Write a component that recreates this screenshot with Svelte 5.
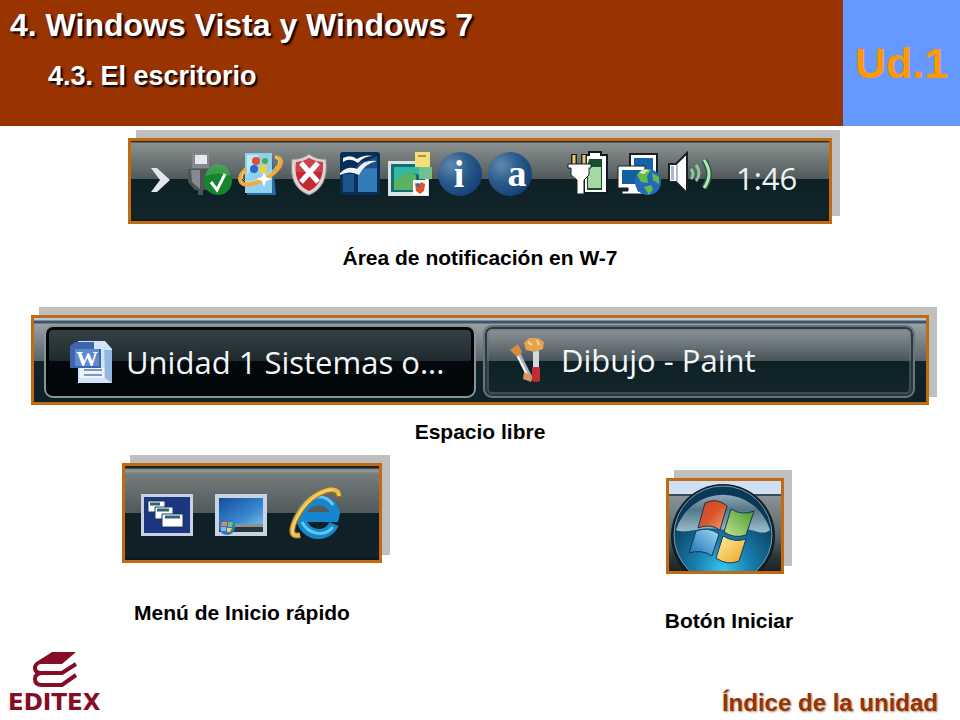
<script>
  const unit = 'Ud.1';
  const tasks = [
    { label: 'Unidad 1 Sistemas o...', icon: 'word', active: true },
    { label: 'Dibujo - Paint', icon: 'paint', active: false }
  ];
</script>

<div class="slide">
  <header>
    <div class="titles">
      <h1>4. Windows Vista y Windows 7</h1>
      <h2>4.3. El escritorio</h2>
    </div>
    <div class="unit">{unit}</div>
  </header>

  <main>
    <figure class="tray-figure">
      <div class="frame tray">
        <svg class="chevron" width="22" height="46" viewBox="0 0 22 46" aria-hidden="true">
          <path d="M1 17h6l13 12L7 41H1l9-12z" fill="#e4e6ef" />
        </svg>
        <svg width="46" height="46" viewBox="0 0 46 46" aria-hidden="true">
          <path d="M5 2h17v15H5z" fill="#85888c" />
          <path d="M8 4h12v9H8z" fill="#e8e8ee" />
          <path d="M1 18h25v14l-6 7h-4v5h-5v-5H8l-7-8z" fill="#4e5358" />
          <path d="M4 19h9v19l-8-7z" fill="#858a8e" />
          <circle cx="31" cy="30" r="14" fill="#16832d" />
          <path d="M19 25a12 12 0 0 1 24 0q-12-5-24 0z" fill="#48ad55" opacity=".7" />
          <path d="M24 31l6 8 8-16" fill="none" stroke="#fff" stroke-width="3" />
        </svg>
        <svg width="46" height="46" viewBox="0 0 46 46" aria-hidden="true">
          <path d="M10 4h25l4 40H10z" fill="#286ba5" />
          <path d="M8 2h27v40H8z" fill="#8fd2ef" />
          <path d="M10 4h12L10 24z" fill="#c1e9f6" />
          <circle cx="19" cy="10" r="4" fill="#df5137" />
          <circle cx="28" cy="10" r="3" fill="#50a947" />
          <circle cx="17" cy="18" r="4" fill="#236bd0" />
          <circle cx="26" cy="18" r="4" fill="#f4cf35" />
          <path d="M38 6C52 8 40 24 19 32 5 37-3 30 9 18" fill="none" stroke="#f1aa3c" stroke-width="4" />
          <path d="M38 6C48 9 37 22 19 29 8 33 1 28 8 20" fill="none" stroke="#ffd791" stroke-width="1" />
          <path d="M27 21l2 5 6 2-6 2-2 6-2-6-5-2 5-2z" fill="#fff" />
        </svg>
        <svg width="46" height="46" viewBox="0 0 46 46" aria-hidden="true">
          <path d="M22 3q8 6 17 5 3 28-17 36Q1 36 5 8q9 1 17-5z" fill="#ddd4d2" stroke="#8e8988" />
          <path d="M22 7q7 4 14 4 1 22-14 29Q6 33 9 11q7 0 13-4z" fill="#c22732" />
          <path d="M22 7q7 4 14 4v10H9V11q7 0 13-4z" fill="#d5555b" opacity=".6" />
          <path d="M14 12l17 19M31 12L14 31" stroke="#fff" stroke-width="5" />
        </svg>
        <svg width="46" height="46" viewBox="0 0 46 46" aria-hidden="true">
          <rect x="3" y="1" width="40" height="43" rx="3" fill="#082d56" />
          <rect x="6" y="23" width="11" height="18" fill="#1c5587" />
          <rect x="21" y="17" width="19" height="24" fill="#337cb9" />
          <path d="M18 18q5-10 12-8l10-5v12z" fill="#1b4f87" />
          <path d="M6 7q8-4 14 1 7-5 16-3-9 0-15 7-8-6-15-1zM3 22q8-8 17-4 7-10 20-8-13 3-18 14-9-5-19 0z" fill="#eff5fb" />
        </svg>
        <svg width="46" height="46" viewBox="0 0 46 46" aria-hidden="true">
          <path d="M1 10h41v35H1z" fill="#d7e6e4" />
          <path d="M4 13h34v28H4z" fill="#126e70" />
          <path d="M7 16h26v8Q21 20 7 30z" fill="#32b8a3" />
          <path d="M7 30q14-12 22-6v15H7z" fill="#5ab264" />
          <path d="M28 1h15v15H28z" fill="#f2df77" />
          <path d="M31 5h8" stroke="#a7924f" stroke-width="2" />
          <path d="M32 16h13v12H32z" fill="#71c08d" />
          <path d="M26 29h15v15H26z" fill="#fff" />
          <path d="M28 32l4 2 2-3 4 2-1 7-4 3-4-3z" fill="#dd532b" />
          <circle cx="31" cy="34" r="2" fill="#3f6ca8" />
        </svg>
        <svg width="46" height="46" viewBox="0 0 46 46" aria-hidden="true">
          <defs>
            <radialGradient id="badge" cx=".3" cy=".3" r=".8">
              <stop offset="0" stop-color="#6189ad" />
              <stop offset=".5" stop-color="#2a5a8b" />
              <stop offset="1" stop-color="#143f75" />
            </radialGradient>
          </defs>
          <circle cx="23" cy="23" r="22" fill="url(#badge)" />
          <text class="letter" x="22" y="36">i</text>
        </svg>
        <svg width="46" height="46" viewBox="0 0 46 46" aria-hidden="true">
          <circle cx="23" cy="23" r="22" fill="url(#badge)" />
          <text class="letter" x="30" y="35">a</text>
        </svg>
        <svg class="power" width="46" height="46" viewBox="0 0 46 46" aria-hidden="true">
          <path d="M17 4h5V1h12v3h6v38H17z" fill="#fff" stroke="#101a1a" stroke-width="2" />
          <path d="M22 8h13v31H20V17z" fill="#174e2c" />
          <path d="M21 16h13v21H21z" fill="#a5d8a6" />
          <path d="M7 3v12M17 3v12" stroke="#26231a" stroke-width="6" />
          <path d="M7 4v11M17 4v11" stroke="#e6ca70" stroke-width="3" />
          <path d="M1 13h23v4h-2v7l-5 5v14h-7V29l-6-5v-7H1z" fill="#fff" stroke="#172020" />
        </svg>
        <svg width="46" height="46" viewBox="0 0 46 46" aria-hidden="true">
          <path d="M13 3h27v27H13z" fill="#fff" stroke="#142025" stroke-width="2" />
          <path d="M17 7h19v20H17z" fill="#1762a6" />
          <path d="M1 15h27v22h-7v3h6v3H5v-3h6v-3H1z" fill="#fff" stroke="#142025" />
          <path d="M5 19h19v14H5z" fill="#12609f" />
          <circle cx="31" cy="31" r="13" fill="#236abd" />
          <path d="M20 24q5-8 14-5l-4 6 1 7-7-1zM35 22l7 4v7l-6-4zM27 36l7-2 2 4-4 6z" fill="#65bd47" />
          <path d="M22 22q4-5 10-3l-5 4z" fill="#d0eaac" />
        </svg>
        <svg width="46" height="46" viewBox="0 0 46 46" aria-hidden="true">
          <path d="M2 13h7L20 2v40L9 31H2z" fill="#fff" stroke="#182225" stroke-width="2" />
          <path d="M4 15h3v14H4z" fill="#aab5d1" />
          <path d="M10 14v16" stroke="#b0b9cd" stroke-width="2" />
          <path d="M24 18q4 5 0 10M29 14q6 8 0 16" fill="none" stroke="#8bc69a" stroke-width="3" />
          <path d="M37 9q10 14 0 28" fill="none" stroke="#285e39" stroke-width="6" />
          <path d="M37 9q10 14 0 28" fill="none" stroke="#b6e4bd" stroke-width="3" />
        </svg>
        <time>1:46</time>
      </div>
      <figcaption>Área de notificación en W-7</figcaption>
    </figure>

    <figure class="task-figure">
      <div class="frame taskbar">
        {#each tasks as task}
          <button class="task" class:active={task.active}>
            {#if task.icon === 'word'}
              <svg width="46" height="46" viewBox="0 0 46 46" aria-hidden="true">
                <path d="M10 2h27l7 8v34H10z" fill="#d3e3f8" />
                <path d="M36 2v9h8v33l-7-5z" fill="#91b7e2" />
                <path d="M12 29h24v10H12z" fill="#eff5ff" />
                <path d="M16 31h18M16 36h18" stroke="#7e99bf" stroke-width="2" />
                <path d="M2 7l5-4h19v7h7v19H2z" fill="#3c65ad" />
                <path d="M7 10h24v17H7z" fill="#5c8acb" />
                <text x="19" y="27" text-anchor="middle" font-family="Liberation Serif, serif" font-weight="700" font-size="22" fill="#fff">W</text>
              </svg>
            {:else}
              <svg width="42" height="46" viewBox="0 0 42 46" aria-hidden="true">
                <g transform="translate(3 1)">
                  <path d="M8 15l12 24" stroke="#aab5bb" stroke-width="4" />
                  <path d="M7 17l10 20" stroke="#fff" stroke-width="2" />
                  <path d="M0 12l8-6 4 8-5 5z" fill="#d78a3e" />
                  <path d="M14 34l9 4-2 6-8-3z" fill="#d69562" />
                  <path d="M23 13h6v18h-6z" fill="#d2d9dc" />
                  <path d="M22 29h8v14q-4 2-8 0z" fill="#c12c30" />
                  <path d="M14 5l5-5h9l6 4-1 7-8 3-9-2z" fill="#e5a450" />
                  <path d="M18 4l4 3M27 2l2 5" stroke="#ffd68c" stroke-width="2" />
                </g>
              </svg>
            {/if}
            <span>{task.label}</span>
          </button>
        {/each}
      </div>
      <figcaption>Espacio libre</figcaption>
    </figure>

    <div class="pair">
      <figure class="quick-figure">
        <div class="frame quick">
          <button aria-label="Cambiar de ventana">
            <svg width="54" height="54" viewBox="0 0 54 54" aria-hidden="true">
              <path d="M1 8h52v42H1z" fill="#c7d0e6" />
              <path d="M4 11h46v36H4z" fill="#1c367f" />
              <g fill="#fff" stroke="#123d62">
                <path d="M8 15h17v11H8z" /><path d="M15 21h18v12H15z" /><path d="M22 28h21v13H22z" />
              </g>
              <path d="M10 18h10M17 24h12M25 31h15" stroke="#326272" stroke-width="3" />
            </svg>
          </button>
          <button aria-label="Mostrar escritorio">
            <svg width="54" height="54" viewBox="0 0 54 54" aria-hidden="true">
              <defs>
                <linearGradient id="desktop" x1="0" y1="0" x2="1" y2="1">
                  <stop offset="0" stop-color="#164ba0" /><stop offset=".65" stop-color="#3b8ad0" /><stop offset="1" stop-color="#83bce5" />
                </linearGradient>
              </defs>
              <path d="M1 8h52v42H1z" fill="#c5d3e5" />
              <path d="M5 12h44v28H5z" fill="url(#desktop)" />
              <path d="M5 38h44v8H5z" fill="#26383c" />
              <path d="M20 38h29v3H20z" fill="#8b9495" />
              <circle cx="13" cy="41" r="8" fill="#3278b5" />
              <path d="M8 36h5v4H7z" fill="#df8464" /><path d="M14 36h5l-1 5h-4z" fill="#75bb76" />
              <path d="M7 41h5v4H7z" fill="#79baf0" /><path d="M13 42h5l-2 4h-3z" fill="#f3cf62" />
            </svg>
          </button>
          <button aria-label="Internet Explorer">
            <svg width="54" height="54" viewBox="0 0 54 54" aria-hidden="true">
              <path d="M46 38A17 17 0 1 1 47 27L46 31H17" fill="none" stroke="#1687cc" stroke-width="10" />
              <path d="M14 24C18 9 37 6 45 19M14 36c6 12 22 16 31 5" fill="none" stroke="#60c8ef" stroke-width="3" />
              <path d="M51 11C51-3 26 5 13 24 2 41 1 52 12 49" fill="none" stroke="#8e742d" stroke-width="6" />
              <path d="M51 10C51-3 26 5 13 24 2 41 1 52 12 49" fill="none" stroke="#edbd48" stroke-width="4" />
              <path d="M45 4C32 3 19 16 12 27 5 38 3 46 6 49" fill="none" stroke="#ffe38e" stroke-width="1" />
            </svg>
          </button>
        </div>
        <figcaption>Menú de Inicio rápido</figcaption>
      </figure>

      <figure class="start-figure">
        <div class="frame">
          <button class="start" aria-label="Iniciar">
            <svg width="112" height="90" viewBox="0 0 112 90" aria-hidden="true">
              <defs>
                <linearGradient id="bar" x1="0" y1="0" x2="0" y2="1">
                  <stop offset="0" stop-color="#8a9499" /><stop offset=".55" stop-color="#5a6265" /><stop offset=".8" stop-color="#2d3639" /><stop offset="1" stop-color="#1b2326" />
                </linearGradient>
                <radialGradient id="orb" cx=".5" cy=".85" r=".7">
                  <stop offset="0" stop-color="#35c5ef" /><stop offset=".4" stop-color="#187fae" /><stop offset="1" stop-color="#0a3856" />
                </radialGradient>
                <linearGradient id="glass" x1="0" y1="0" x2="0" y2="1">
                  <stop offset="0" stop-color="#91a9b9" /><stop offset=".4" stop-color="#547888" /><stop offset="1" stop-color="#9dbfd0" />
                </linearGradient>
                <linearGradient id="red" x1="0" y1="0" x2="1" y2="1">
                  <stop offset="0" stop-color="#d23f24" /><stop offset=".5" stop-color="#d8562c" /><stop offset="1" stop-color="#f6a773" />
                </linearGradient>
                <linearGradient id="green" x1="0" y1="1" x2="1" y2="0">
                  <stop offset="0" stop-color="#c6e391" /><stop offset="1" stop-color="#43982f" />
                </linearGradient>
                <linearGradient id="blue" x1="1" y1="0" x2="0" y2="1">
                  <stop offset="0" stop-color="#a1ddf7" /><stop offset="1" stop-color="#1769b4" />
                </linearGradient>
                <linearGradient id="yellow" x1="0" y1="0" x2="1" y2="1">
                  <stop offset="0" stop-color="#fff0a0" /><stop offset="1" stop-color="#eda321" />
                </linearGradient>
              </defs>
              <path d="M0 0h112v14H0z" fill="#cfe0f5" />
              <path d="M0 14h112v76H0z" fill="url(#bar)" />
              <path d="M0 14h112" stroke="#3e4a52" stroke-width="2" />
              <circle cx="54" cy="55" r="52" fill="#101e28" />
              <circle cx="54" cy="54" r="49" fill="url(#orb)" stroke="#76a0b5" stroke-width="1" />
              <path d="M7 49A49 49 0 0 1 101 49C91 57 83 43 56 49 31 44 17 54 7 49z" fill="url(#glass)" />
              <path d="M36 22q12-6 22 3l-7 24q-10-7-22-2z" fill="url(#red)" stroke="#19364a" />
              <path d="M62 28q11 7 23 2l-8 24q-12 4-22-3z" fill="url(#green)" stroke="#19364a" />
              <path d="M27 50q12-5 23 3l-7 22q-10-7-23-3z" fill="url(#blue)" stroke="#103a5a" />
              <path d="M54 55q12 7 23 3l-7 22q-12 5-23-3z" fill="url(#yellow)" stroke="#103a5a" />
            </svg>
          </button>
        </div>
        <figcaption>Botón Iniciar</figcaption>
      </figure>
    </div>
  </main>

  <footer>
    <div class="brand">
      <svg width="46" height="36" viewBox="0 0 46 36" aria-hidden="true">
        <path d="M20 0h24L30 12H6z" fill="#870d25" />
        <path d="M21 2L8 10Q3 12 3 16q0 5 6 5h21l14-9M9 21q-6 1-6 6 0 6 7 6h20l14-10" fill="none" stroke="#870d25" stroke-width="4" />
      </svg>
      <span>EDITEX</span>
    </div>
    <a href="#indice">Índice de la unidad</a>
  </footer>
</div>

<style>
  :global(body) {
    margin: 0;
    background: #fff;
  }

  .slide {
    display: flex;
    flex-direction: column;
    min-height: 100vh;
    color: #000;
    font-family: "Liberation Sans", Arial, sans-serif;
  }

  header {
    display: flex;
    background: #993300;
  }

  .titles {
    flex: 1;
    padding: 6px 10px 32px;
    color: #fff;
    text-shadow: 2px 2px 2px #000;
  }

  h1, h2 {
    margin: 0;
    font-weight: 700;
  }

  h1 {
    font-size: 32px;
    line-height: 38px;
  }

  h2 {
    padding: 14px 0 0 38px;
    font-size: 27px;
    line-height: 36px;
  }

  .unit {
    display: flex;
    align-items: center;
    justify-content: center;
    width: 117px;
    background: #6699ff;
    color: #ff9900;
    font-size: 43px;
    font-weight: 700;
  }

  main {
    display: flex;
    flex-direction: column;
  }

  figure {
    display: flex;
    flex-direction: column;
    align-items: center;
    margin: 0;
  }

  figcaption {
    font-size: 21px;
    font-weight: 700;
    line-height: 24px;
  }

  .frame {
    border: 3px solid #c26a12;
    box-shadow: 8px -8px 0 #bfbfbf;
  }

  .frame svg {
    display: block;
    flex: none;
  }

  .frame button {
    padding: 0;
    border: 0;
    background: none;
    font: inherit;
  }

  .tray-figure {
    gap: 22px;
    padding-top: 12px;
  }

  .tray {
    display: flex;
    gap: 4px;
    box-sizing: border-box;
    width: 704px;
    height: 86px;
    padding: 10px 16px 0 19px;
    background: linear-gradient(#252d2f 0 1px, #8b9191 2px, #747b7b 20%, #50595a 48%, #0d2025 48%, #11252a 96%, #09191c);
  }

  .tray .chevron {
    margin-right: 11px;
  }

  .tray .power {
    margin-left: 30px;
  }

  .letter {
    fill: #fff;
    font-family: "Liberation Serif", serif;
    font-size: 38px;
    font-weight: 700;
    text-anchor: middle;
  }

  time {
    margin-left: 19px;
    padding-top: 6px;
    color: #eef1f4;
    font-family: "Open Sans", "Noto Sans", sans-serif;
    font-size: 31px;
    font-weight: 500;
    line-height: 42px;
  }

  .task-figure {
    gap: 15px;
    padding-top: 45px;
  }

  .taskbar {
    display: flex;
    gap: 7px;
    box-sizing: border-box;
    width: 898px;
    padding: 7px 11px 4px 10px;
    background: linear-gradient(#b7cadc 0 2px, #405464 3px 5px, #98a0a3 6px, #59666b 51%, #10242a 51%, #102128);
  }

  .taskbar .task {
    display: flex;
    flex: 1;
    gap: 12px;
    align-items: center;
    height: 73px;
    padding: 0 22px 3px;
    border: 2px solid #687578;
    border-radius: 9px;
    background: linear-gradient(#8f989b, #6c767a 25%, #475459 49%, #0e2025 49%, #13272d);
    box-shadow: inset 0 0 0 2px #2b393e, inset 0 0 0 4px #68757980;
    color: #f4f6f7;
    font-family: "Open Sans", "Noto Sans", sans-serif;
    font-size: 31px;
    font-weight: 500;
    line-height: 40px;
    white-space: nowrap;
  }

  .taskbar .active {
    padding: 1px 22px 0;
    border-color: #899295;
    background: linear-gradient(#344145, #2b373b 25%, #1d292d 49%, #03090c 49%, #020608);
    box-shadow: inset 0 0 0 3px #020607;
  }

  .pair {
    display: grid;
    grid-template-columns: 1fr 1fr;
  }

  .quick-figure {
    gap: 38px;
    padding: 19px 0 0 4px;
  }

  .quick {
    display: flex;
    gap: 20px;
    box-sizing: border-box;
    width: 260px;
    height: 100px;
    margin-left: 20px;
    padding: 20px 15px;
    background: linear-gradient(#1b2224 0 2px, #788081 3px, #939998 5px, #747b7b 8px, #50595b 50%, #0e2126 50%, #102127 96%, #07171b);
  }

  .start-figure {
    gap: 35px;
    padding: 34px 0 0 18px;
  }

  .start-figure .frame {
    margin-right: 8px;
  }

  .start {
    display: block;
  }

  footer {
    display: flex;
    align-items: flex-end;
    justify-content: space-between;
    margin-top: auto;
    padding: 0 22px 4px 8px;
  }

  .brand {
    display: flex;
    flex-direction: column;
    color: #870d25;
    font-family: "DejaVu Sans", sans-serif;
    font-size: 23px;
    font-weight: 700;
    line-height: 28px;
  }

  .brand svg {
    margin-left: 24px;
  }

  footer a {
    color: #993300;
    font-size: 24px;
    font-weight: 700;
    line-height: 26px;
    text-decoration: none;
    text-shadow: 1px 1px 2px #a58c80;
  }
</style>
